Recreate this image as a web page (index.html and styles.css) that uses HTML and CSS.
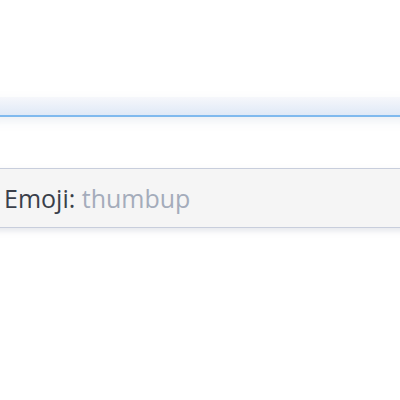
FILE: index.html
```html
<!DOCTYPE html>
<html>
<head>
<meta charset="utf-8">
<link rel="stylesheet" href="styles.css">
</head>
<body>
<div class="page">
  <div class="topbar"></div>
  <div class="suggest">
    <p class="line"><span class="label">Emoji:</span> <span class="value">thumbup</span></p>
  </div>
</div>
</body>
</html>
```
FILE: styles.css
```css
html, body {
  margin: 0;
  padding: 0;
  background: #ffffff;
}
.page {
  width: 400px;
  height: 400px;
  overflow: hidden;
  padding-top: 97px;
  box-sizing: border-box;
}
.topbar {
  height: 18px;
  margin: 0 -10px;
  background: linear-gradient(#f6f7fb, #dfe9f7);
  border-bottom: 2px solid #7fb9ee;
  box-shadow: 0 4px 10px rgba(180, 190, 210, 0.25);
}
.suggest {
  margin: 51px -10px 0 -10px;
  height: 58px;
  background: #f5f5f5;
  border-top: 1px solid #c8cedc;
  border-bottom: 1px solid #c8cedc;
  box-shadow: 0 3px 6px rgba(150, 160, 180, 0.25);
  display: flex;
  align-items: center;
  padding-left: 14px;
  font-family: "Open Sans", sans-serif;
  font-size: 25px;
}
.line {
  margin: 0;
}
.label {
  color: #3a3f4a;
  font-weight: 400;
}
.value {
  color: #a4acbb;
}
```
